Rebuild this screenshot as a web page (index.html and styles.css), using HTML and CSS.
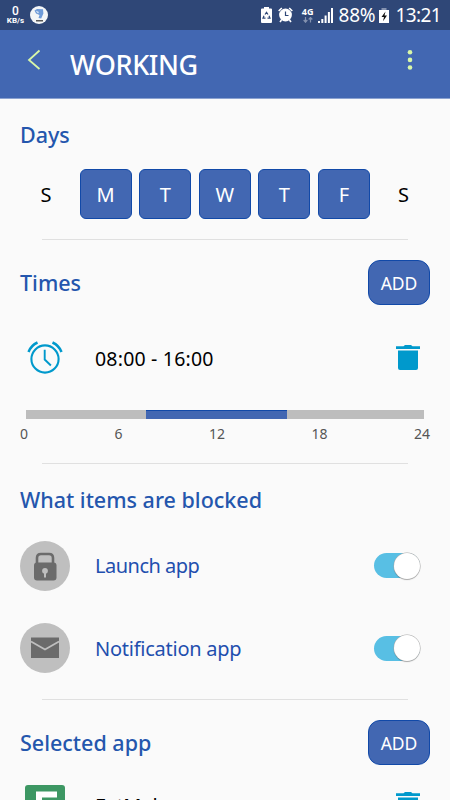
FILE: index.html
```html
<!DOCTYPE html>
<html lang="en">
<head>
  <meta charset="UTF-8" />
  <meta name="viewport" content="width=device-width, initial-scale=1">
  <title>Working</title>
  <link rel="stylesheet" href="styles.css">
</head>
<body>

  <div class="status-bar">
    <div class="net-speed">
      <span class="net-value">0</span>
      <span class="net-unit">KB/s</span>
    </div>
    <svg class="app-badge" width="18" height="18" viewBox="0 0 18 18">
      <circle cx="9" cy="9" r="9" fill="#f4f6f7"/>
      <path d="M4.5 4.5 7 3l6 .3.4 4.2-2.2 5-2.7-.6L9.500 9 6 7.500z" fill="#6f9bd8"/>
      <path d="M5.500 4.500 9 6l-1 1.500z" fill="#dce9f8"/>
      <rect x="6" y="14" width="7" height="1.500" fill="#555"/>
    </svg>
    <div class="status-icons">
      <svg class="battery-saver" width="11" height="16" viewBox="0 0 11 16">
        <path d="M3 0h5v1.500h2q1 0 1 1V15q0 1-1 1H1q-1 0-1-1V2.500q0-1 1-1h2z" fill="#fff"/>
        <path d="M4 7.500 5.500 5.300 7 7.500M8 8.800l1 2.400H6.500M4.500 11.200H2l1-2.400" fill="none" stroke="#2f4777" stroke-width="1.200"/>
      </svg>
      <svg class="status-alarm" width="15" height="16" viewBox="0 0 15 16">
        <circle cx="7.500" cy="8" r="6.400" fill="#fff"/>
        <path d="M.7 4 3.800 1M14.300 4 11.200 1M3.500 13 2 15M11.500 13l1.500 2" stroke="#fff" stroke-width="1.600"/>
        <path d="M7.500 4.500v4h3" fill="none" stroke="#2f4777" stroke-width="1.200"/>
      </svg>
      <div class="network">
        <span>4G</span>
        <svg width="10" height="6" viewBox="0 0 10 6">
          <path d="M2.500 0v4M.7 3l1.800 2.200L4.300 3M7.500 5.500V1.500M5.700 2.500 7.500.5l1.800 2" fill="none" stroke="#8593b0" stroke-width="1.200"/>
        </svg>
      </div>
      <svg class="signal" width="15" height="15" viewBox="0 0 15 15">
        <path d="M0 13h2v2H0zM3.300 11h2v4h-2zM6.600 7.500h2V15h-2zM9.900 4h2v11h-2zM13 0h2v15h-2z" fill="#fff"/>
      </svg>
      <span class="percent">88%</span>
      <svg class="battery" width="10" height="15" viewBox="0 0 10 15">
        <path d="M2.500 0h5v2h-5z" fill="#8593b0"/>
        <path d="M0 2h10v13H0z" fill="#fff"/>
        <path d="M6.500 3.500 2.500 9H5l-1 4.300L8 7.500H5.500z" fill="#111"/>
      </svg>
      <span class="clock">13:21</span>
    </div>
  </div>

  <header class="app-bar">
    <svg class="back" width="14" height="22" viewBox="0 0 14 22">
      <path d="M12.500 1.500 2 11l10.500 9" fill="none" stroke="#d8f7a8" stroke-width="1.800"/>
    </svg>
    <h1>WORKING</h1>
    <svg class="more" width="6" height="22" viewBox="0 0 6 22">
      <g fill="#d8f7a8">
        <circle cx="3" cy="3.200" r="2.300"/>
        <circle cx="3" cy="10.900" r="2.300"/>
        <circle cx="3" cy="18.500" r="2.300"/>
      </g>
    </svg>
  </header>

  <main>
    <section class="days-section">
      <h2>Days</h2>
      <div class="days">
        <span class="day">S</span>
        <span class="day on">M</span>
        <span class="day on">T</span>
        <span class="day on">W</span>
        <span class="day on">T</span>
        <span class="day on">F</span>
        <span class="day">S</span>
      </div>
    </section>

    <section class="times-section">
      <div class="section-head">
        <h2>Times</h2>
        <button class="add">ADD</button>
      </div>
      <div class="time-row">
        <svg class="alarm" width="36" height="34" viewBox="0 0 36 34">
          <g fill="none" stroke="#0099cc">
            <circle cx="18" cy="18" r="13.600" stroke-width="2.100"/>
            <path d="M17.700 8.800V18.500l6.200 6" stroke-width="1.900"/>
            <path d="M1.500 11Q4 4.500 10.500 1.500M25.500 1.500Q32 4.500 34.500 11" stroke-width="2.500"/>
          </g>
        </svg>
        <span class="range">08:00 - 16:00</span>
        <svg class="trash" width="24" height="26" viewBox="0 0 24 26">
          <path d="M0 1.200h7.500L9 0h6l1.500 1.200H24V4H0zM2 5.500h20V23q0 2-2 2H4q-2 0-2-2z" fill="#0099cc"/>
        </svg>
      </div>
      <div class="bar"><div class="bar-fill"></div></div>
      <div class="scale">
        <span>0</span><span>6</span><span>12</span><span>18</span><span>24</span>
      </div>
    </section>

    <section class="blocked-section">
      <h2>What items are blocked</h2>
      <div class="item">
        <svg class="item-icon" width="50" height="50" viewBox="0 0 50 50">
          <circle cx="25" cy="25" r="25" fill="#bfbfbf"/>
          <path d="M17 23v-6q0-4 4-4h8q4 0 4 4v6" fill="none" stroke="#6b6b6b" stroke-width="2.600"/>
          <rect x="14" y="21.500" width="22.500" height="18" rx="3" fill="#6b6b6b"/>
          <circle cx="25" cy="29.800" r="2.900" fill="#bfbfbf"/>
          <path d="M24 31h2v5.500h-2z" fill="#bfbfbf"/>
        </svg>
        <span class="launch">Launch app</span>
        <div class="switch"></div>
      </div>
      <div class="item">
        <svg class="item-icon" width="50" height="50" viewBox="0 0 50 50">
          <circle cx="25" cy="25" r="25" fill="#bfbfbf"/>
          <path d="M11 14.500h28v20.500H11z" fill="#6b6b6b"/>
          <path d="M11 18.500 25 26.500l14-8" fill="none" stroke="#bfbfbf" stroke-width="1.800"/>
        </svg>
        <span class="notification">Notification app</span>
        <div class="switch"></div>
      </div>
    </section>

    <section class="apps-section">
      <div class="section-head">
        <h2>Selected app</h2>
        <button class="add">ADD</button>
      </div>
      <div class="app-row">
        <svg class="app-icon" width="40" height="40" viewBox="0 0 40 40">
          <rect width="40" height="40" rx="3" fill="#3d9763"/>
          <path d="M11 6.500h21v6H17v5h13v6H17V34h-6z" fill="#fff"/>
        </svg>
        <span class="app-name">FotMob</span>
        <svg class="trash" width="24" height="26" viewBox="0 0 24 26">
          <path d="M0 1.200h7.500L9 0h6l1.500 1.200H24V4H0zM2 5.500h20V23q0 2-2 2H4q-2 0-2-2z" fill="#0099cc"/>
        </svg>
      </div>
    </section>
  </main>

</body>
</html>
```
FILE: styles.css
```css
* {
  box-sizing: border-box;
}

body {
  margin: 0;
  height: 800px;
  overflow: hidden;
  display: flex;
  flex-direction: column;
  font-family: "Noto Sans", sans-serif;
  background: #fafafa;
  color: #000;
}

svg {
  display: block;
  flex: none;
}

/* status bar */
.status-bar {
  flex: none;
  display: flex;
  align-items: center;
  height: 30px;
  padding: 0 9px 0 6px;
  background: #2f4777;
  color: #fff;
}

.net-speed {
  display: flex;
  flex-direction: column;
  align-items: center;
  width: 19px;
  font-family: Roboto, sans-serif;
}

.net-value {
  font-size: 12px;
  font-weight: 500;
  line-height: 12px;
}

.net-unit {
  font-size: 8px;
  font-weight: 700;
  line-height: 8px;
}

.app-badge {
  margin-left: 5px;
}

.status-icons {
  display: flex;
  align-items: center;
  margin-left: auto;
}

.status-alarm {
  margin-left: 6px;
}

.network {
  display: flex;
  flex-direction: column;
  align-items: center;
  margin-left: 9px;
  font-size: 9px;
  font-weight: 700;
  line-height: 10px;
}

.signal {
  margin-left: 5px;
}

.percent {
  margin-left: 5px;
  font-size: 19px;
  letter-spacing: -0.2px;
}

.battery {
  margin: 0 6px 0 4px;
}

.clock {
  font-size: 19px;
  letter-spacing: -0.6px;
}

/* title bar */
.app-bar {
  flex: none;
  display: flex;
  align-items: center;
  height: 69px;
  padding: 0 37px 0 27px;
  background: #4267b2;
  border-bottom: 1px solid #8ba2d0;
  color: #fff;
}

.back {
  margin-bottom: 8px;
}

h1 {
  margin: 2px 0 0 29px;
  font-size: 27px;
  font-weight: 500;
  line-height: 36px;
  letter-spacing: -0.4px;
}

.more {
  margin: 0 0 8px auto;
}

/* sections */
section {
  position: relative;
  padding: 0 20px;
}

section + section::before {
  content: "";
  position: absolute;
  top: 0;
  left: 42px;
  right: 42px;
  height: 1px;
  background: #e0e0e0;
}

h2 {
  margin: 0;
  font-size: 21.5px;
  font-weight: 500;
  line-height: 30px;
  color: #2456ad;
}

.days-section {
  height: 140px;
  padding-top: 21px;
}

.days {
  display: grid;
  grid-template-columns: repeat(7, 52px);
  gap: 7.6px;
  margin-top: 19px;
}

.day {
  height: 50px;
  line-height: 51px;
  text-align: center;
  font-size: 20px;
}

.day.on {
  background: #4267b2;
  border: 1px solid #1149a8;
  border-radius: 6px;
  line-height: 49px;
  color: #fff;
}

.times-section {
  height: 224px;
  padding-top: 21px;
}

.section-head {
  display: flex;
  align-items: center;
  justify-content: space-between;
}

.add {
  width: 62px;
  height: 45px;
  padding: 0;
  background: #4267b2;
  border: 1px solid #1149a8;
  border-radius: 12px;
  font-family: inherit;
  font-size: 17.5px;
  color: #fff;
}

.time-row {
  display: flex;
  align-items: center;
  height: 60px;
  margin-top: 23px;
  padding: 0 10px 0 7px;
}

.range {
  margin-left: 32px;
  font-size: 19.5px;
  letter-spacing: 0.2px;
}

.trash {
  margin-left: auto;
}

.bar {
  height: 9px;
  margin: 22px 6px 0;
  background: #bdbdbd;
}

.bar-fill {
  width: 141px;
  height: 9px;
  margin-left: 120px;
  background: #4267b2;
  border-top: 1px solid #1149a8;
}

.scale {
  display: flex;
  justify-content: space-between;
  margin-top: 6px;
  font-size: 14px;
  line-height: 18px;
  color: #555;
}

.blocked-section {
  height: 236px;
  padding-top: 22px;
}

.item {
  display: flex;
  align-items: center;
  height: 50px;
  margin-top: 25.5px;
  padding-right: 10px;
  font-size: 20px;
  color: #1f4fae;
}

.item + .item {
  margin-top: 32.5px;
}

.item-icon {
  margin-right: 25px;
}

.launch {
  letter-spacing: -0.5px;
}

.notification {
  letter-spacing: -0.25px;
}

/* switch in its on state */
.switch {
  display: flex;
  align-items: center;
  justify-content: flex-end;
  width: 46px;
  height: 25px;
  margin-left: auto;
  background: #58bfe4;
  border-radius: 13px;
}

.switch::after {
  content: "";
  flex: none;
  width: 26px;
  height: 26px;
  background: #fff;
  border-radius: 50%;
  box-shadow: 0 0 0 0.5px #aaa, 0 1px 1px rgba(0, 0, 0, 0.3);
}

.apps-section {
  padding-top: 21px;
}

.app-row {
  display: flex;
  align-items: center;
  margin-top: 20px;
  padding: 0 10px 0 5px;
}

.app-name {
  margin: 1px 0 0 30px;
  font-size: 20px;
  letter-spacing: -0.5px;
}
```
